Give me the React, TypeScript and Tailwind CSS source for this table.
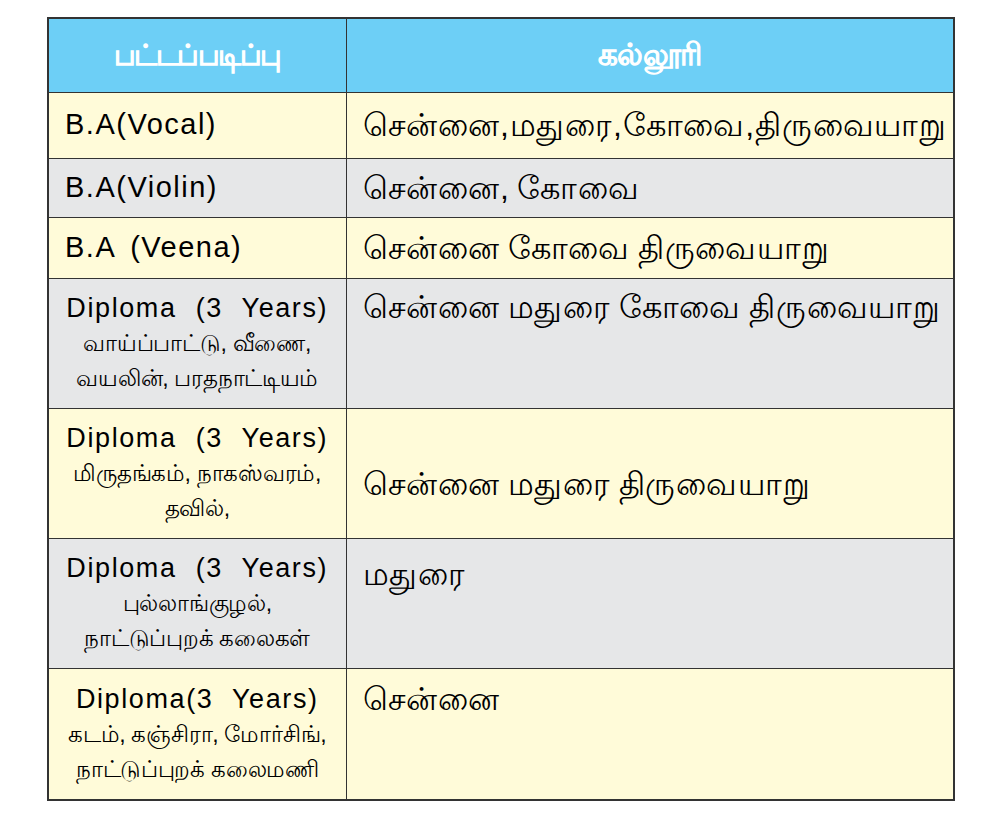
const latin = "font-['Liberation_Sans',Arial,sans-serif]";

type Row = {
  bg: string;
  h: string;
  left: { title: string; sub?: string[] };
  right: string;
  rightPad?: string;
};

const rows: Row[] = [
  { bg: "bg-[#fffbd9]", h: "h-[66px]", left: { title: "B.A(Vocal)" }, right: "சென்னை,மதுரை,கோவை,திருவையாறு" },
  { bg: "bg-[#e6e7e8]", h: "h-[59px]", left: { title: "B.A(Violin)" }, right: "சென்னை, கோவை" },
  { bg: "bg-[#fffbd9]", h: "h-[61px]", left: { title: "B.A (Veena)" }, right: "சென்னை கோவை திருவையாறு" },
  {
    bg: "bg-[#e6e7e8]",
    h: "h-[130px]",
    left: { title: "Diploma (3 Years)", sub: ["வாய்ப்பாட்டு, வீணை,", "வயலின், பரதநாட்டியம்"] },
    right: "சென்னை மதுரை கோவை திருவையாறு",
    rightPad: "pt-[10px]",
  },
  {
    bg: "bg-[#fffbd9]",
    h: "h-[130px]",
    left: { title: "Diploma (3 Years)", sub: ["மிருதங்கம், நாகஸ்வரம்,", "தவில்,"] },
    right: "சென்னை மதுரை திருவையாறு",
    rightPad: "pt-[57px]",
  },
  {
    bg: "bg-[#e6e7e8]",
    h: "h-[130px]",
    left: { title: "Diploma (3 Years)", sub: ["புல்லாங்குழல்,", "நாட்டுப்புறக் கலைகள்"] },
    right: "மதுரை",
    rightPad: "pt-[17px]",
  },
  {
    bg: "bg-[#fffbd9]",
    h: "h-[132px]",
    left: { title: "Diploma(3 Years)", sub: ["கடம், கஞ்சிரா, மோர்சிங்,", "நாட்டுப்புறக் கலைமணி"] },
    right: "சென்னை",
    rightPad: "pt-[12px]",
  },
];

export default function App() {
  return (
    <div className="w-[1000px] h-[816px] bg-white pt-[17px] pl-[47px]">
      <table className={`table-fixed w-[906px] border-collapse border-2 border-[#333] ${latin} text-black`}>
        <colgroup>
          <col className="w-[298px]" />
          <col className="w-[608px]" />
        </colgroup>
        <thead>
          <tr className="h-[74px] bg-[#6dcff6]">
            <th className="border border-[#333] text-white text-[29px] tracking-[-1.5px] font-normal [-webkit-text-stroke:1.4px_white]">
              பட்டப்படிப்பு
            </th>
            <th className="border border-[#333] text-white text-[31px] tracking-[-0.5px] font-normal [-webkit-text-stroke:1.4px_white]">
              கல்லூரி
            </th>
          </tr>
        </thead>
        <tbody>
          {rows.map((r, i) => (
            <tr key={i} className={`${r.bg} ${r.h}`}>
              <td className="border border-[#333] px-4 align-middle">
                {r.left.sub ? (
                  <div className="flex flex-col items-center text-center">
                    <div className="text-[27px] leading-[36px] tracking-[1.6px] [word-spacing:10px] whitespace-nowrap">
                      {r.left.title}
                    </div>
                    {r.left.sub.map((s, j) => (
                      <div key={j} className="text-[23px] leading-[35px] tracking-[-0.3px] whitespace-nowrap">
                        {s}
                      </div>
                    ))}
                  </div>
                ) : (
                  <div className="text-[29px] tracking-[1.5px] [word-spacing:6px]">{r.left.title}</div>
                )}
              </td>
              <td
                className={`border border-[#333] pl-4 pr-1 text-[32px] leading-[36px] tracking-[0.8px] [word-spacing:-2px] whitespace-nowrap ${
                  r.rightPad ? `align-top ${r.rightPad}` : "align-middle"
                }`}
              >
                {r.right}
              </td>
            </tr>
          ))}
        </tbody>
      </table>
    </div>
  );
}
